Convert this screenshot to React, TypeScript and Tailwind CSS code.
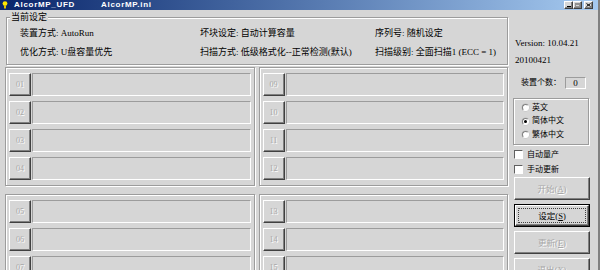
import React from "react";

const etched = "border border-[#9c9c9c] shadow-[inset_1px_1px_0_#fff,1px_1px_0_#fff]";
const raised = "border-t border-l border-white border-b border-r border-b-[#404040] border-r-[#404040] shadow-[inset_-1px_-1px_0_#808080]";
const sunken = "border-t border-l border-[#9c9c9c] border-b border-r border-b-white border-r-white";

function Slot({ n }: { n: string }) {
  return (
    <div className="flex h-[23px]">
      <div className={`${raised} w-[22px] h-[23px] flex items-center justify-center text-[8px] text-[#a8a8a8] [text-shadow:1px_1px_0_#fff]`}>
        {n}
      </div>
      <div className={`${sunken} flex-1 ml-[1px]`}></div>
    </div>
  );
}

function Panel({ slots }: { slots: string[] }) {
  return (
    <div className={`${etched} flex-1 h-[119px] px-[3px] pt-[5px] flex flex-col gap-[5px]`}>
      {slots.map((s) => (
        <Slot key={s} n={s} />
      ))}
    </div>
  );
}

function SideButton({ label, hot, disabled, active }: { label: string; hot: string; disabled?: boolean; active?: boolean }) {
  return (
    <div className={`${active ? "border border-black" : ""} w-[76px] h-[23px] ml-[1px]`}>
      <div className={`${raised} h-full flex items-center justify-center`}>
        <div className={`${active ? "border border-dotted border-[#404040] w-[68px] h-[15px]" : ""} flex items-center justify-center text-[8.5px] whitespace-nowrap ${disabled ? "text-[#a8a8a8] [text-shadow:1px_1px_0_#fff]" : "text-black"}`}>
          {label}(<span className="underline">{hot}</span>)
        </div>
      </div>
    </div>
  );
}

export default function App() {
  return (
    <div className="w-[600px] h-[270px] overflow-hidden bg-[#d6d6d6] flex flex-col border-r-2 border-[#808080] font-['Liberation_Serif','Noto_Sans_CJK_SC',serif] text-[9px] text-black leading-[10px]">
      {/* title bar */}
      <div className="h-[10px] flex items-center bg-gradient-to-r from-[#0a246a] to-[#a6caf0] pl-[2px] pr-[5px]">
        <svg width="6" height="8" viewBox="0 0 6 8">
          <circle cx="3" cy="2.6" r="2.4" fill="#ffe600" />
          <rect x="2" y="4.5" width="2" height="3" fill="#e0c000" />
        </svg>
        <span className="ml-[6px] font-['Liberation_Sans',sans-serif] font-bold text-[8px] tracking-[0.7px] text-white">AlcorMP_UFD</span>
        <span className="ml-[26px] font-['Liberation_Sans',sans-serif] font-bold text-[8px] tracking-[0.7px] text-white">AlcorMP.ini</span>
        <div className="ml-auto flex items-center">
          <div className={`${raised} w-[9px] h-[8px] bg-[#d6d6d6] flex items-end justify-center pb-[1px]`}>
            <div className="w-[4px] h-[1px] bg-black"></div>
          </div>
          <div className={`${raised} w-[9px] h-[8px] bg-[#d6d6d6] flex items-center justify-center`}>
            <div className="w-[5px] h-[4px] border border-[#909090] border-t-2"></div>
          </div>
          <div className={`${raised} ml-[2px] w-[9px] h-[8px] bg-[#d6d6d6] flex items-center justify-center`}>
            <svg width="5" height="4" viewBox="0 0 5 4">
              <path d="M0.5 0.5 L4.5 3.5 M4.5 0.5 L0.5 3.5" stroke="#000" strokeWidth="1" />
            </svg>
          </div>
        </div>
      </div>

      <div className="flex pl-[5px]">
        {/* left column */}
        <div className="w-[503px] flex flex-col">
          <div className={`${etched} relative ml-[1px] mt-[7px] h-[48px]`}>
            <span className="absolute left-[3px] top-[-6px] bg-[#d6d6d6] px-[1px]">当前设定</span>
            <div className="grid grid-cols-[180px_175px_1fr] pl-[13px] pt-[10px] gap-y-[9px]">
              <span>装置方式: AutoRun</span>
              <span>坏块设定: 自动计算容量</span>
              <span>序列号: 随机设定</span>
              <span>优化方式: U盘容量优先</span>
              <span>扫描方式: 低级格式化--正常检测(默认)</span>
              <span>扫描级别: 全面扫描1 (ECC = 1)</span>
            </div>
          </div>

          <div className="flex gap-[4px] mt-[2px]">
            <Panel slots={["01", "02", "03", "04"]} />
            <Panel slots={["09", "10", "11", "12"]} />
          </div>
          <div className="flex gap-[4px] mt-[8px]">
            <Panel slots={["05", "06", "07", "08"]} />
            <Panel slots={["13", "14", "15", "16"]} />
          </div>
        </div>

        {/* right column */}
        <div className="w-[77px] ml-[5px] flex flex-col text-[8px]">
          <span className="mt-[28px] ml-[2px] text-[9px] whitespace-nowrap">Version: 10.04.21</span>
          <span className="mt-[7px] ml-[2px] text-[9px]">20100421</span>

          <div className="mt-[12px] flex items-center h-[12px] whitespace-nowrap">
            <span className="ml-[8px]">装置个数：</span>
            <div className={`${sunken} ml-auto mr-[4px] w-[21px] h-[12px] flex items-center justify-center text-[9px]`}>0</div>
          </div>

          <div className={`${etched} mt-[9px] w-[76px] h-[47px] pt-[2px] pl-[8px] flex flex-col`}>
            {[
              ["英文", false],
              ["简体中文", true],
              ["繁体中文", false],
            ].map(([t, on]) => (
              <div key={t as string} className="flex items-center h-[13.5px]">
                <div className="w-[7px] h-[7px] rounded-full bg-white border border-t-[#808080] border-l-[#808080] border-b-white border-r-white shadow-[0_0_0_0.5px_#c0c0c0] flex items-center justify-center">
                  {on ? <div className="w-[3px] h-[3px] rounded-full bg-black"></div> : null}
                </div>
                <span className="ml-[3px]">{t as string}</span>
              </div>
            ))}
          </div>

          <div className="mt-[2px] flex items-center h-[15px] ml-[1px]">
            <div className="w-[9px] h-[9px] bg-white border border-t-[#606060] border-l-[#606060] border-b-white border-r-white"></div>
            <span className="ml-[4px]">自动量产</span>
          </div>
          <div className="flex items-center h-[15px] ml-[1px]">
            <div className="w-[9px] h-[9px] bg-white border border-t-[#606060] border-l-[#606060] border-b-white border-r-white"></div>
            <span className="ml-[4px]">手动更新</span>
          </div>

          <div className="flex flex-col gap-[4px]">
            <SideButton label="开始" hot="A" disabled />
            <SideButton label="设定" hot="S" active />
            <SideButton label="更新" hot="E" disabled />
            <SideButton label="退出" hot="X" disabled />
          </div>
        </div>
      </div>
    </div>
  );
}
